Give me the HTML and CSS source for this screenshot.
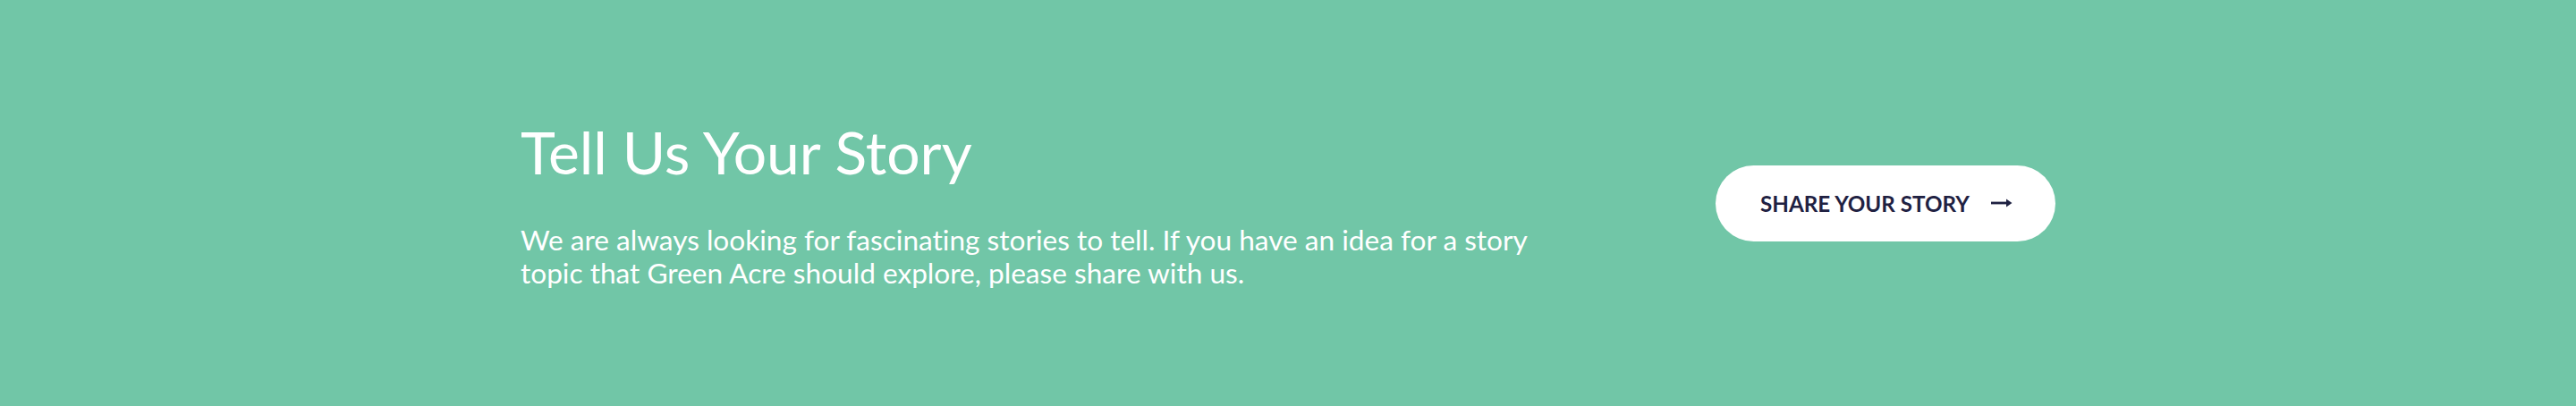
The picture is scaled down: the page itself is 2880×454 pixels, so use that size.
FILE: index.html
```html
<!DOCTYPE html>
<html lang="en">
<head>
<meta charset="utf-8">
<title>Tell Us Your Story</title>
<link rel="stylesheet" href="styles.css">
</head>
<body>
<section class="story">
  <div class="story__inner">
    <div class="story__text">
      <h2 class="story__title">Tell Us Your Story</h2>
      <p class="story__body">We are always looking for fascinating stories to tell. If you have an idea for a story topic that Green Acre should explore, please share with us.</p>
    </div>
    <a class="story__btn" href="#">
      <span>SHARE YOUR STORY</span>
      <svg class="story__arrow" width="24" height="12" viewBox="0 0 24 12" aria-hidden="true">
        <path d="M0 6 H19" stroke="#1f2142" stroke-width="2.8" fill="none"/>
        <path d="M17 1.5 L23.5 6 L17 10.5 Z" fill="#1f2142"/>
      </svg>
    </a>
  </div>
</section>
</body>
</html>
```

FILE: styles.css
```css
* { box-sizing: border-box; }
html, body { margin: 0; padding: 0; }
body {
  background: #71c6a7;
  font-family: Lato, "Open Sans", "Liberation Sans", sans-serif;
  font-variant-ligatures: none;
}
.story {
  height: 454px;
  background: #71c6a7;
  display: flex;
  align-items: center;
  justify-content: center;
}
.story__inner {
  width: 1716px;
  display: flex;
  align-items: center;
  justify-content: space-between;
}
.story__text {
  width: 1160px;
}
.story__title {
  margin: 0;
  font-size: 66px;
  font-weight: 400;
  line-height: 1.2;
  color: #ffffff;
}
.story__body {
  margin: 40px 0 0 0;
  font-size: 31.6px;
  line-height: 37px;
  color: #ffffff;
  font-weight: 400;
}
.story__btn {
  width: 380px;
  height: 85px;
  border-radius: 43px;
  background: #ffffff;
  color: #1f2142;
  text-decoration: none;
  display: flex;
  align-items: center;
  justify-content: center;
  gap: 24px;
  font-size: 24.2px;
  font-weight: 700;
  padding-left: 2px;
}
.story__arrow { display: block; }
```
